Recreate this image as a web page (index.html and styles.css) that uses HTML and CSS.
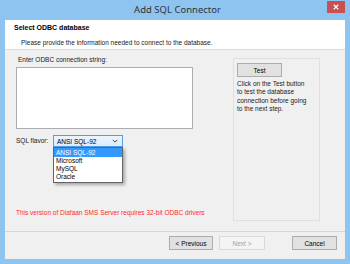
FILE: index.html
```html
<!DOCTYPE html>
<html lang="en">

<head>
    <meta charset="UTF-8">
    <title>Add SQL Connector</title>
    <link rel="stylesheet" href="styles.css">
</head>

<body>
    <div class="window">
        <!-- Title bar -->
        <div class="titlebar">
            <span class="title">Add SQL Connector</span>
            <button class="close-btn" aria-label="Close">
                <svg viewBox="0 0 8 8" width="6" height="6">
                    <path d="M1 1L7 7M7 1L1 7" stroke="#fff" stroke-width="1.6" />
                </svg>
            </button>
        </div>

        <div class="client">
            <!-- Wizard header -->
            <div class="wizard-head">
                <div class="head-title">Select ODBC database</div>
                <div class="head-sub">Please provide the information needed to connect to the database.</div>
            </div>

            <!-- Page body -->
            <div class="wizard-body">
                <div class="left-col">
                    <label class="field-label" for="conn-string">Enter ODBC connection string:</label>
                    <textarea id="conn-string" class="conn-box"></textarea>

                    <div class="flavor-row">
                        <span class="field-label">SQL flavor:</span>
                        <div class="combo">
                            <div class="combo-box">
                                <span>ANSI SQL-92</span>
                                <svg class="chevron" viewBox="0 0 8 5" width="6" height="4">
                                    <path d="M1 1l3 3 3-3" fill="none" stroke="#333" stroke-width="1.2" />
                                </svg>
                            </div>
                            <ul class="combo-list">
                                <li class="selected">ANSI SQL-92</li>
                                <li>Microsoft</li>
                                <li>MySQL</li>
                                <li>Oracle</li>
                            </ul>
                        </div>
                    </div>

                    <p class="warning">This version of Diafaan SMS Server requires 32-bit ODBC drivers</p>
                </div>

                <div class="test-panel">
                    <button class="btn test-btn">Test</button>
                    <p class="test-help">Click on the Test button<br>to test the database<br>connection before going<br>to the next step.</p>
                </div>
            </div>

            <!-- Footer buttons -->
            <div class="wizard-foot">
                <button class="btn">&lt; Previous</button>
                <button class="btn" disabled>Next &gt;</button>
                <button class="btn cancel-btn">Cancel</button>
            </div>
        </div>
    </div>
</body>

</html>
```

FILE: styles.css
```css
html,
body {
    margin: 0;
    padding: 0;
    background: #8ec4f0;
}

.window {
    width: 350px;
    height: 264px;
    box-sizing: border-box;
    background: #8ec4f0;
    padding: 0 5px 5px 5px;
    display: flex;
    flex-direction: column;
    font-family: 'Liberation Sans', Arial, sans-serif;
    font-size: 6.5px;
    color: #000;
}

.titlebar {
    height: 20px;
    display: grid;
    grid-template-columns: 1fr auto 1fr;
    align-items: start;
}

.title {
    grid-column: 2;
    font-family: 'Noto Sans', sans-serif;
    font-size: 9.5px;
    line-height: 20px;
    color: #333;
    margin-left: 5px;
}

.close-btn {
    grid-column: 3;
    justify-self: end;
    margin-top: 1px;
    width: 18px;
    height: 12px;
    padding: 0;
    border: none;
    background: #c75050;
    display: flex;
    align-items: center;
    justify-content: center;
}

.client {
    flex: 1;
    display: flex;
    flex-direction: column;
    background: #f0f0f0;
}

.wizard-head {
    height: 30px;
    background: #fff;
    border-bottom: 1px solid #dadada;
    box-sizing: border-box;
    padding: 3px 0 0 9px;
}

.head-title {
    font-weight: bold;
    font-size: 7px;
    line-height: 10px;
}

.head-sub {
    line-height: 10px;
    margin-top: 5px;
    padding-left: 7px;
    color: #1a1a1a;
}

.wizard-body {
    height: 181px;
    display: flex;
    padding: 0 25px 0 11px;
}

.left-col {
    width: 177px;
    padding-top: 5px;
    display: flex;
    flex-direction: column;
}

.field-label {
    line-height: 10px;
    padding-left: 2px;
    color: #1a1a1a;
    white-space: nowrap;
}

.conn-box {
    margin: 2px 0 0 0;
    width: 177px;
    height: 62px;
    box-sizing: border-box;
    border: 1px solid #abadb3;
    background: #fff;
    resize: none;
    padding: 0;
}

.flavor-row {
    margin-top: 6px;
    display: flex;
    align-items: center;
}

.flavor-row .field-label {
    padding-left: 0;
    width: 37px;
}

.combo {
    position: relative;
}

.combo-box {
    width: 70px;
    height: 12px;
    box-sizing: border-box;
    border: 1px solid #569de5;
    background: linear-gradient(#ecf4fc, #dcecfc);
    display: flex;
    align-items: center;
    justify-content: space-between;
    padding: 0 4px 0 3px;
}

.combo-list {
    position: absolute;
    top: 12px;
    left: 0;
    width: 70px;
    box-sizing: border-box;
    margin: 0;
    padding: 0 0 1px 0;
    list-style: none;
    background: #fff;
    border: 1px solid #646464;
    box-shadow: 2px 2px 3px rgba(0, 0, 0, 0.3);
}

.combo-list li {
    line-height: 8px;
    padding-left: 2px;
}

.combo-list li.selected {
    background: #3399ff;
    color: #fff;
    line-height: 9px;
}

.warning {
    margin: auto 0 13px 0;
    line-height: 10px;
    color: #ff2a2a;
    white-space: nowrap;
}

.test-panel {
    width: 87px;
    margin: 8px 0 10px 40px;
    box-sizing: border-box;
    border: 1px solid #e0e0e0;
    padding: 4px 3px;
}

.btn {
    height: 14px;
    box-sizing: border-box;
    border: 1px solid #adadad;
    background: #e1e1e1;
    font-family: 'Liberation Sans', Arial, sans-serif;
    font-size: 6.5px;
    color: #000;
    padding: 0;
}

.btn:disabled {
    border-color: #d9d9d9;
    background: #f4f4f4;
    color: #a0a0a0;
}

.test-btn {
    width: 45px;
    display: block;
}

.test-help {
    margin: 3px 0 0 0;
    line-height: 8.3px;
    color: #1a1a1a;
}

.wizard-foot {
    flex: 1;
    border-top: 1px solid #d5d5d5;
    display: flex;
    align-items: flex-start;
    padding: 4px 8px 0 0;
    justify-content: flex-end;
}

.wizard-foot .btn {
    width: 44px;
    margin-left: 6px;
}

.wizard-foot .btn:disabled {
    width: 46px;
}

.wizard-foot .cancel-btn {
    width: 45px;
    margin-left: 27px;
}
```
